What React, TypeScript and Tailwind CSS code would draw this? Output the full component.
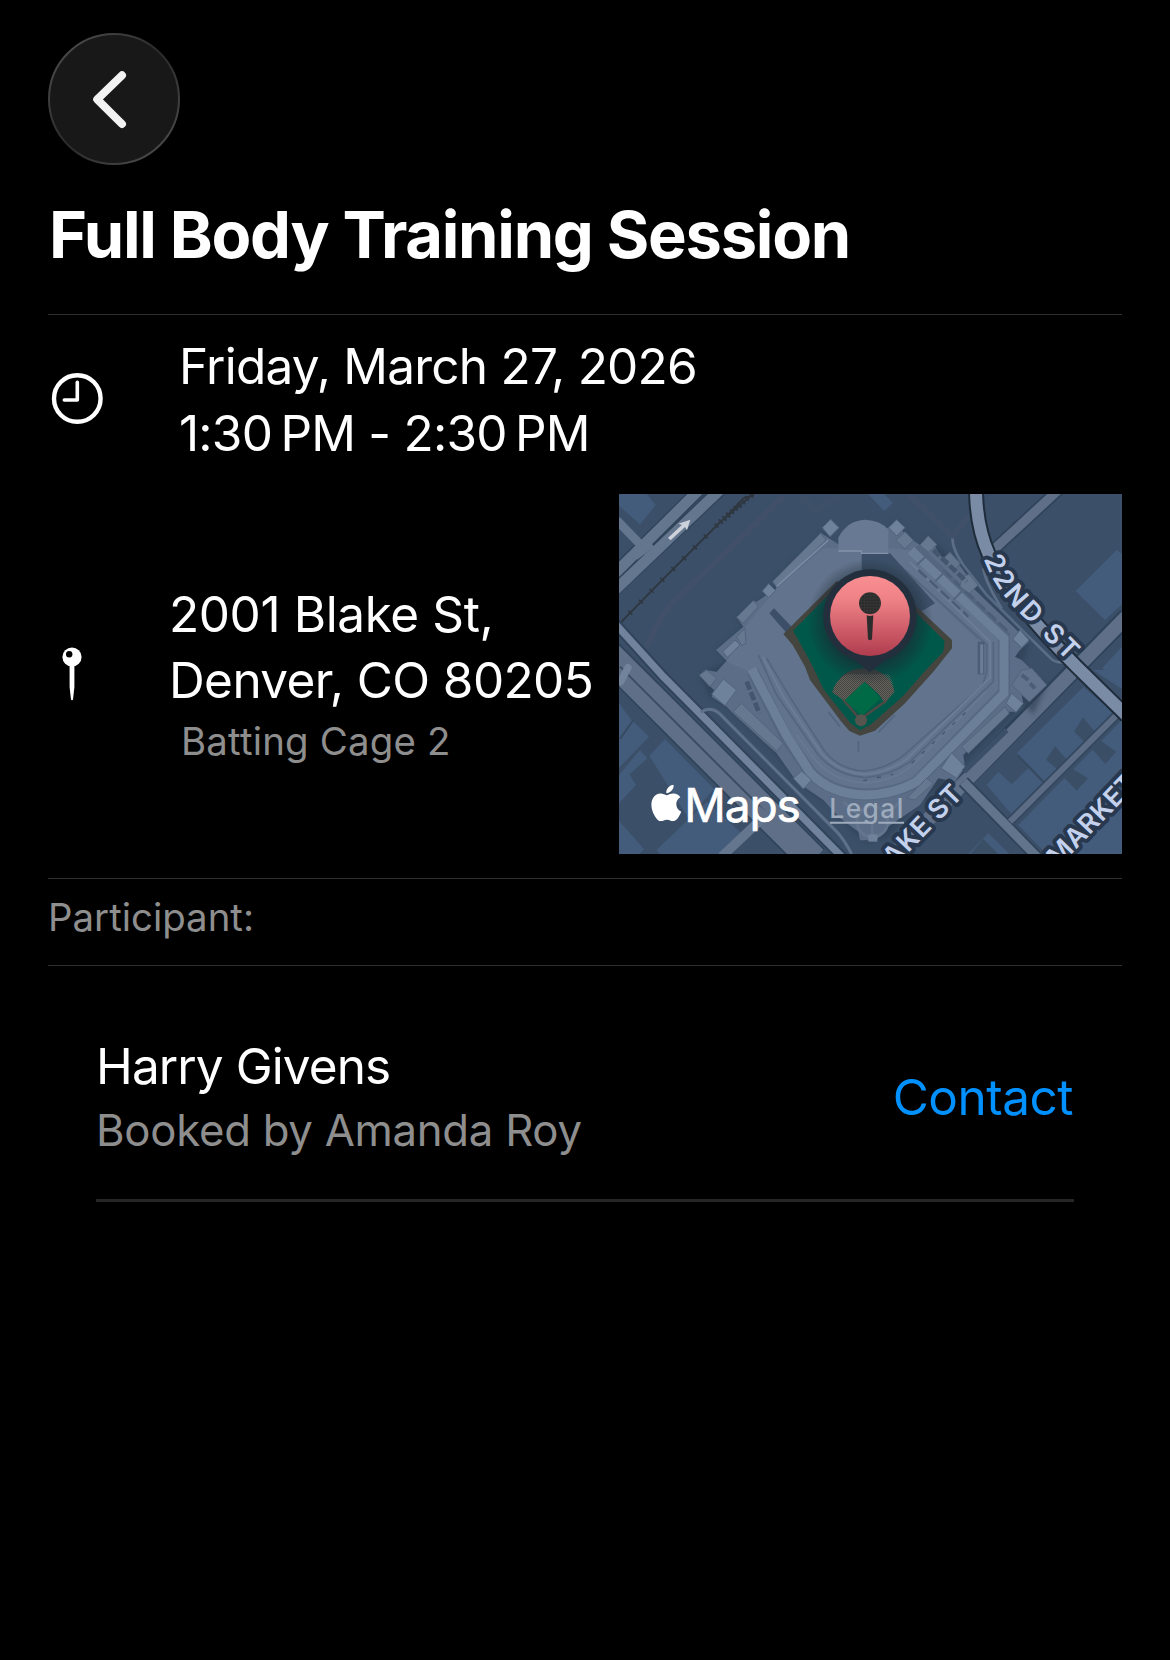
import { SiApple } from 'react-icons/si';

const booking = {
  title: 'Full Body Training Session',
  date: 'Friday, March 27, 2026',
  time: '1:30\u202fPM - 2:30\u202fPM',
  street: '2001 Blake St,',
  city: 'Denver, CO 80205',
  place: 'Batting Cage 2',
};

const participants = [{ id: 1, name: 'Harry Givens', bookedBy: 'Amanda Roy' }];

function BackButton() {
  return (
    <button className="block size-[132px]" aria-label="Back">
      <svg viewBox="0 0 132 132" className="size-full" fill="none">
        <defs>
          <linearGradient id="rim" x1="0.1" y1="0.1" x2="0.9" y2="0.9">
            <stop offset="0" stopColor="#4a4a4a" />
            <stop offset="0.5" stopColor="#2a2a2a" />
            <stop offset="1" stopColor="#4a4a4a" />
          </linearGradient>
        </defs>
        <circle cx="66" cy="66" r="65" fill="#181818" stroke="url(#rim)" strokeWidth="2" />
        <path
          d="M74 42.3 49.2 66.3 74 91"
          stroke="#f2f2f2"
          strokeWidth="8"
          strokeLinecap="round"
          strokeLinejoin="round"
        />
      </svg>
    </button>
  );
}

function ClockIcon() {
  return (
    <svg viewBox="0 0 52 52" className="size-[52px]" fill="none" stroke="#fff">
      <circle cx="26.3" cy="25.5" r="23.3" strokeWidth="4.4" />
      <path d="M26.3 9.3V27H13.3" strokeWidth="3.6" strokeLinecap="round" strokeLinejoin="round" />
    </svg>
  );
}

function PinIcon() {
  return (
    <svg viewBox="0 0 20 54" className="h-[54px] w-5" fill="#fff">
      <circle cx="10" cy="10" r="9.6" />
      <circle cx="7.2" cy="7.2" r="3.2" fill="#000" />
      <path d="M7.6 18h4.8v22L11 52.4q-1 1.6-2 0L7.6 40z" />
    </svg>
  );
}

// Three map units to a pixel
function StadiumMap() {
  return (
    <svg viewBox="27 27 1509 1080" className="block h-[360px] w-[503px]" fill="none">
      <defs>
        <linearGradient id="pin" x1="0" y1="0" x2="0" y2="1">
          <stop offset="0" stopColor="#f98f92" />
          <stop offset="0.3" stopColor="#ee8186" />
          <stop offset="1" stopColor="#b03c4e" />
        </linearGradient>
        <pattern id="dots" width="9" height="9" patternUnits="userSpaceOnUse">
          <circle cx="3" cy="3" r="1.6" fill="#0b0b0b" />
        </pattern>
        <pattern id="dirt" width="6" height="6" patternUnits="userSpaceOnUse">
          <path d="M0 0h3v3h-3zM3 3h3v3h-3z" fill="#66645f" />
        </pattern>
        <radialGradient id="pinShadow">
          <stop offset="0.6" stopColor="#1c2733" stopOpacity="0.75" />
          <stop offset="1" stopColor="#1c2733" stopOpacity="0" />
        </radialGradient>
        <filter id="soft" x="-10%" y="-10%" width="120%" height="120%">
          <feGaussianBlur stdDeviation="8" />
        </filter>
        <path id="street22" d="M1121 222C1149 296 1190 345 1235 390L1444 599" />
      </defs>

      <rect x="27" y="27" width="1509" height="1080" fill="#3b5068" />

      {/* Buildings */}
      <g fill="#445c7c">
        <path d="M27 27H110L137 60 90 118 27 62z" />
        <path d="M27 655 62 702 117 755 27 848z" />
        <path d="M27 870 90 795 112 820 58 868 78 900 27 955z" />
        <path d="M165 763 312 912 235 1000 118 812z" />
        <path d="M140 1095 290 950 400 1050 345 1107H150z" />
        <path d="M27 1008 102 1092 88 1107H27z" />
        <path d="M774 27H822L848 53 823 78z" />
        <path d="M1520 195 1536 207V358L1485 405 1397 318z" />
        <path d="M1536 485V605L1477 549z" />
        <path d="M1450 555H1536V612z" />
        <path d="M1220 805 1420 606 1520 690 1305 897 1265 855z" />
        <path d="M1130 900 1165 860 1205 898 1255 850 1305 900 1208 992z" />
        <path d="M1225 1020 1536 705V1107H1310z" />
        <path d="M1075 1107 1135 1045 1198 1107z" />
      </g>
      <g fill="#3a4f66">
        <path d="M1392 740 1419 697 1458 745 1428 775z" />
        <path d="M1308 824 1335 783 1376 830 1348 858z" />
        <path d="M1443 788 1466 762 1518 800 1486 837z" />
        <path d="M1357 872 1380 847 1434 880 1400 917z" />
        <path d="M1082 1107 1120 1062 1165 1107z" />
      </g>
      <path d="M1223 810 1303 893M30 762 70 705" stroke="#364a61" strokeWidth="6" />

      {/* Faint footpaths */}
      <g stroke="#445068" strokeOpacity="0.75" strokeWidth="16">
        <path d="M108 490C130 440 150 395 190 350L350 200 520 35" />
        <path d="M575 30 620 78 690 27" strokeOpacity="0.4" />
        <path d="M895 27 1028 155 1075 95" strokeOpacity="0.5" />
      </g>

      {/* Roads, upper left */}
      <g stroke="#2f4359" strokeWidth="40">
        <path d="M10 268 268 15M10 318 340 5" />
      </g>
      <g stroke="#64758e">
        <path d="M10 270 270 12" strokeWidth="32" />
        <path d="M10 320 340 5" strokeWidth="32" />
        <path d="M20 105 112 200" strokeWidth="26" />
        <path d="M72 212 122 172" strokeWidth="32" />
      </g>
      <path d="M178 162 228 116" stroke="#cdd2da" strokeWidth="11" />
      <path d="M205 116 241 104 231 136 223 122z" fill="#cdd2da" />

      {/* Railway */}
      <path d="M27 418 140 302 330 112 435 22M340 105 400 40 432 30" stroke="#2f3740" strokeWidth="6" />
      <path d="M27 418 140 302 330 112 435 22" stroke="#2f3740" strokeWidth="17" strokeDasharray="5 41" />
      <path d="M330 112 420 32" stroke="#2f3740" strokeWidth="18" strokeDasharray="6 9" />

      {/* Roads, lower left */}
      <path d="M-20 495 610 1125" stroke="#2f4359" strokeWidth="96" />
      <path d="M-20 495 610 1125" stroke="#5f6f87" strokeWidth="86" />
      <path d="M30 545 500 1015" stroke="#3b4c63" strokeWidth="6" />
      <path d="M335 1115 468 990" stroke="#64758e" strokeWidth="28" />
      <path d="M440 975 540 1055" stroke="#5f6f87" strokeWidth="30" />
      <path d="M10 410 160 575 700 1120" stroke="#2f4359" strokeWidth="34" />
      <path d="M10 410 160 575 700 1120" stroke="#70829c" strokeWidth="22" />
      <path d="M272 682Q300 662 328 685L680 1040Q700 1060 725 1107" stroke="#5e708a" strokeWidth="9" />
      <path d="M32 590 56 545" stroke="#7485 9e" strokeWidth="0" />
      <path d="M32 590 54 548" stroke="#72839c" strokeWidth="22" strokeLinecap="round" />

      {/* Roads, right */}
      <path d="M1150 195 1345 15" stroke="#2f4359" strokeWidth="38" />
      <path d="M1150 195 1345 15" stroke="#5f6f87" strokeWidth="28" />
      <path d="M1550 395 1040 910" stroke="#2f4359" strokeWidth="54" />
      <path d="M1550 395 860 1100" stroke="#5f6f87" strokeWidth="42" />
      <path d="M1060 890 1285 1120" stroke="#2f4359" strokeWidth="38" />
      <path d="M1060 890 1285 1120" stroke="#62738c" strokeWidth="27" />
      <path d="M1530 680 1200 1010" stroke="#33475e" strokeWidth="28" />
      <path d="M1530 680 1200 1010" stroke="#5c6c84" strokeWidth="18" />
      <path d="M1027 160C1028 190 1040 212 1060 240L1130 330 1320 518Q1342 540 1368 528M1120 250Q1125 290 1175 370" stroke="#5c6e88" strokeWidth="8" />
      <path d="M1098 10C1098 90 1110 150 1137 210S1230 375 1400 545L1550 692" stroke="#1f2c3b" strokeWidth="48" />
      <path d="M1098 10C1098 90 1110 150 1137 210S1230 375 1400 545L1550 692" stroke="#7a8ba6" strokeWidth="36" />

      {/* Stadium */}
      <path
        d="M685 200 640 143 488 290 500 310 378 400 400 425 318 495 350 527 268 570 300 640 350 665 375 690 500 810 560 890 660 960 720 1030 770 1075 830 1060 930 950 1065 855 1060 840 1240 655 1270 690 1310 600 1235 545 1257 470 1215 425 1090 300 1060 255 955 153 920 190 860 104 830 150z"
        fill="#2b3d52"
        filter="url(#soft)"
        opacity="0.6"
      />
      <path
        d="M685 178 632 143 488 290 500 310 440 350 430 347 380 397 400 425 318 495 350 527 320 560 285 555 268 572 312 615 305 635 350 665 368 684 450 760 500 805 560 890 640 945 690 1000 745 1040 750 1066 800 1066 820 1035 930 960 985 880 1035 890 1065 850 1060 810 1190 680 1215 680 1240 655 1235 630 1260 650 1310 600 1235 525 1215 515 1230 495 1257 470 1225 440 1090 310 1070 270 1030 215 1010 240 955 153 930 180 885 150 860 104 835 128z"
        fill="#5c6e87"
      />
      <path
        d="M640 190 500 310 410 420 350 530 420 560 530 760 600 870Q660 935 765 935 860 930 920 890L1180 630V460L920 200 850 190z"
        fill="#62748d"
      />
      {/* Stands */}
      <g stroke="#54667f" strokeWidth="5">
        <path d="M885 255 1130 478V562L1118 600 880 812Q830 850 765 858 690 855 645 800L545 645 470 520" />
        <path d="M870 240 1105 462" strokeOpacity="0.7" />
        <path d="M1150 470V590L900 830Q840 872 765 878 680 872 625 810L500 630 445 510" />
      </g>
      <g stroke="#6b7d96" strokeWidth="6">
        <path d="M900 232 1140 470V578L890 822Q835 862 765 868 685 864 635 805L522 638 458 515" />
        <path d="M1128 620 912 836Q850 890 765 893 670 890 612 820L560 750" strokeOpacity="0.6" />
      </g>
      <path
        d="M915 190 1182 452V622L920 890Q850 928 765 928 660 925 600 860L530 760 428 560"
        stroke="#4f617a"
        strokeWidth="36"
        strokeOpacity="0.55"
      />
      <path
        d="M903 196 1182 460V625L920 890Q850 930 765 930 660 927 600 862L530 752 425 552"
        stroke="#6c7f99"
        strokeWidth="27"
      />
      <path d="M1113 470V568" stroke="#4c5e77" strokeWidth="20" />
      <path d="M1115 478V566" stroke="#6b7d96" strokeWidth="9" />
      <path d="M925 255 1075 395M1000 255 1200 445" stroke="#4c5e77" strokeWidth="8" strokeDasharray="34 12" />
      <path d="M920 240 950 212M975 290 1005 260M1030 345 1062 312" stroke="#54667f" strokeWidth="6" />
      <path d="M905 835 1085 665M760 887 850 868" stroke="#44566d" strokeWidth="4" strokeDasharray="12 30" />
      {/* Outbuildings along the stands */}
      <g fill="#6f829c" stroke="#52647c" strokeWidth="3">
        <path d="M662 103 687 128 660 155 637 128z" />
        <path d="M860 104 885 128 860 153 836 128z" />
        <path d="M885 140 910 166 885 192 857 166z" fill="#66788f" />
        <path d="M955 153 981 179 955 202 930 180z" fill="#66788f" />
        <path d="M632 145 648 165 502 308 488 290z" fill="#66788f" />
        <path d="M476 296 497 317 476 338 457 318z" />
        <path d="M430 347 445 365 400 415 380 397z" fill="#66788f" />
        <path d="M375 465 390 480 352 517 338 500z" />
        <path d="M405 430 408 475 395 482 380 455z" fill="#66788f" />
        <path d="M1000 220 1020 202 1050 235 1030 262z" fill="#62748c" />
        <path d="M1055 275 1078 268 1104 300 1078 325 1050 305z" fill="#66788f" />
        <path d="M1230 435 1257 465 1235 488 1208 462z" />
        <path d="M340 582 380 615 345 662 305 628z" />
        <path d="M268 570 290 555 320 580 300 605z" fill="#66788f" />
        <path d="M395 655 520 775 500 798 370 680z" fill="#66788f" />
        <path d="M550 880 575 858 605 885 580 912z" />
        <path d="M1205 625 1240 655 1218 682 1188 655z" />
        <path d="M1185 665 1198 685 1075 805 1055 785z" fill="#66788f" />
        <path d="M1025 803 1065 845 1040 880 993 850z" />
        <path d="M950 880 970 895 915 945 890 940z" fill="#66788f" />
        <path d="M1235 555 1265 550 1310 600 1258 650 1205 600z" fill="#62748d" />
      </g>
      <path d="M1235 570 1255 585M1260 595 1275 610" stroke="#4c5e77" strokeWidth="12" />
      <path d="M970 195 1070 290M410 590 448 685" stroke="#43566e" strokeWidth="14" strokeDasharray="26 8" />
      <path d="M500 305 655 165" stroke="#7a8ca4" strokeWidth="5" />
      <path d="M1062 860 1190 735" stroke="#3b5068" strokeWidth="16" />
      <circle cx="787" cy="1010" r="46" stroke="#64768e" strokeWidth="9" />
      <path d="M787 1010V1066M745 990 700 950M830 990 870 950" stroke="#64768e" strokeWidth="8" />
      <path d="M775 1048H802V1070H775z" fill="#70829a" />

      {/* Gap behind the outfield */}
      <path d="M755 205H840L975 355 925 385 755 262z" fill="#3b5068" />
      <path d="M478 385 492 370 545 425 528 442z" fill="#3b5068" />
      <path d="M685 200V158Q712 106 765 104 812 106 835 134V207H765V198z" fill="#687a93" />
      <path d="M685 198H755V205H835" stroke="#8293a9" strokeWidth="4" />

      {/* Field */}
      <path
        d="M520 447 680 288 920 365 1026 465V490L970 560 885 655 795 737 750 752 718 738 690 705 600 585 585 545 548 480z"
        fill="#45453f"
      />
      <path
        d="M549 437 680 306 920 385 1004 468 1000 500 945 558 880 632 785 716 750 736 722 715 640 612 606 540 568 470z"
        fill="#00584a"
      />
      <path d="M667 622Q690 552 762 550 835 552 853 620L825 655 804 625 764 590 704 648z" fill="#45453f" />
      <path d="M667 622Q676 585 710 568L835 568Q850 590 853 620L825 655 804 625 764 590 704 648z" fill="url(#dirt)" />
      <path d="M700 645 750 703 828 648" stroke="#4b4a44" strokeWidth="8" />
      <path d="M764 590 812 640 756 692 704 646z" fill="#006a46" />
      <circle cx="753" cy="706" r="18" fill="#55544f" />
      <path d="M655 680 690 725M745 768V800M805 742 855 690" stroke="#4c5e77" strokeWidth="5" strokeOpacity="0.7" />

      {/* Pin */}
      <circle cx="780" cy="410" r="190" fill="url(#pinShadow)" />
      <path d="M722 515 780 562 838 515z" fill="#232f3d" />
      <circle cx="780" cy="393" r="140" fill="#232f3d" />
      <circle cx="780" cy="393" r="120" fill="url(#pin)" />
      <circle cx="780" cy="355" r="33" fill="#333" />
      <circle cx="780" cy="355" r="31" fill="url(#dots)" />
      <path d="M770 391Q780 395 790 391L786 463Q780 469 774 463z" fill="#2d2c2d" />

      {/* Street names */}
      <g
        fill="#c3d1ec"
        stroke="#28384e"
        strokeWidth="24"
        strokeLinejoin="round"
        className="font-['Inter',sans-serif] text-[80px] font-semibold [paint-order:stroke]"
      >
        <text textLength="402" lengthAdjust="spacing">
          <textPath href="#street22">22ND ST</textPath>
        </text>
        <text transform="translate(1064 929) rotate(-46)" textAnchor="end" letterSpacing="3">
          BLAKE ST
        </text>
        <text transform="translate(1345 1148) rotate(-46)" letterSpacing="1">
          MARKET
        </text>
      </g>

      {/* Attribution */}
      <SiApple x="114" y="899" size={110} color="#fff" />
      <text
        x="223"
        y="1011"
        textLength="349"
        fill="#fff"
        stroke="#fff"
        strokeWidth="2"
        className="font-['Inter',sans-serif] text-[138px] font-normal"
      >
        Maps
      </text>
      <text
        x="658"
        y="999"
        textLength="222"
        fill="#9eabbd"
        className="font-['Inter',sans-serif] text-[79px] font-medium"
      >
        Legal
      </text>
      <path d="M660 1013H779M805 1013H882" stroke="#9eabbd" strokeWidth="6" />
    </svg>
  );
}

export default function App() {
  return (
    <div className="min-h-[1660px] w-[1170px] bg-black px-12 pt-[33px] font-['Inter',sans-serif] text-[49.5px] text-white">
      <BackButton />

      <h1 className="mt-[30px] ml-px text-[65px] leading-[80px] font-bold tracking-[-1.26px] whitespace-nowrap">
        {booking.title}
      </h1>

      {/* Date */}
      <div className="mt-[39px] flex items-center border-t border-[#303030] pt-[18px]">
        <div className="-mt-[3px] ml-[3px] w-[128px]">
          <ClockIcon />
        </div>
        <div className="leading-[67px] tracking-[-0.76px] whitespace-nowrap">
          <p>{booking.date}</p>
          <p>{booking.time}</p>
        </div>
      </div>

      {/* Location */}
      <div className="mt-[27px] flex items-center">
        <div className="ml-[14px] w-[107px]">
          <PinIcon />
        </div>
        <div className="-mt-0.5 w-[450px] whitespace-nowrap">
          <p className="leading-[66px] tracking-[-0.4px]">{booking.street}</p>
          <p className="leading-[66px] tracking-[-0.6px]">{booking.city}</p>
          <p className="mt-[3px] pl-3 text-[38.4px] leading-[50px] tracking-[0.2px] text-[#8e8e8e]">
            {booking.place}
          </p>
        </div>
        <StadiumMap />
      </div>

      {/* Participants */}
      <div className="mt-6 border-y border-[#303030] pt-[14px] pb-6">
        <h2 className="text-[38.4px] leading-[48px] text-[#8e8e8e]">Participant:</h2>
      </div>

      <ul className="px-12 pt-[69px]">
        {participants.map((p) => (
          <li key={p.id} className="flex items-center justify-between border-b-[3px] border-[#262626] pb-[41px]">
            <div>
              <p className="leading-[62px] tracking-[-0.9px]">{p.name}</p>
              <p className="mt-[7px] text-[43.7px] leading-[54px] tracking-[-0.26px] text-[#8e8e8e]">
                Booked by {p.bookedBy}
              </p>
            </div>
            <button className="mt-px mr-px leading-[62px] tracking-[-0.5px] text-[#0091ff]">Contact</button>
          </li>
        ))}
      </ul>
    </div>
  );
}
